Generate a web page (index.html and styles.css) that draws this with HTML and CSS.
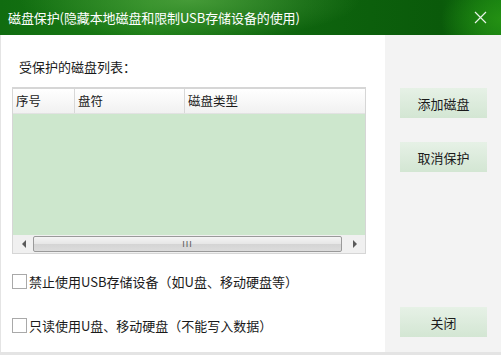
FILE: index.html
```html
<!DOCTYPE html>
<html lang="zh-CN">
<head>
    <meta charset="UTF-8">
    <title>磁盘保护</title>
    <link rel="stylesheet" href="styles.css">
</head>
<body>
    <div class="window">
        <div class="titlebar">
            <span class="title">磁盘保护(隐藏本地磁盘和限制USB存储设备的使用)</span>
            <svg class="close" width="13" height="13" viewBox="0 0 13 13">
                <path d="M1 1 L12 12 M12 1 L1 12" stroke="#e8f4e8" stroke-width="1.2" fill="none"/>
            </svg>
        </div>
        <div class="main">
            <div class="content">
                <div class="list-label">受保护的磁盘列表：</div>
                <div class="table">
                    <div class="thead">
                        <div class="th col-no">序号</div>
                        <div class="th col-drive">盘符</div>
                        <div class="th col-type">磁盘类型</div>
                    </div>
                    <div class="tbody"></div>
                    <div class="hscroll">
                        <div class="arrow arrow-left"></div>
                        <div class="thumb"><span class="grip">III</span></div>
                        <div class="arrow arrow-right"></div>
                    </div>
                </div>
                <label class="check check-first"><span class="box"></span>禁止使用USB存储设备（如U盘、移动硬盘等）</label>
                <label class="check"><span class="box"></span>只读使用U盘、移动硬盘（不能写入数据）</label>
            </div>
            <div class="side">
                <button class="btn">添加磁盘</button>
                <button class="btn btn-second">取消保护</button>
                <button class="btn btn-close">关闭</button>
            </div>
        </div>
    </div>
</body>
</html>
```

FILE: styles.css
```css
body {
    margin: 0;
    font-family: "Noto Sans CJK SC", "Liberation Sans", sans-serif;
    font-size: 13px;
    color: #1a1a1a;
    background: #ffffff;
}
.window {
    width: 501px;
    height: 355px;
    display: flex;
    flex-direction: column;
    overflow: hidden;
}
.titlebar {
    height: 35px;
    flex: none;
    display: flex;
    align-items: center;
    justify-content: space-between;
    padding: 0 14px 0 8px;
    color: #ffffff;
    background:
        radial-gradient(ellipse 170px 40px at 190px 0px, rgba(100, 180, 80, 0.6), rgba(100, 180, 80, 0) 100%),
        radial-gradient(ellipse 60px 40px at 501px 20px, rgba(40, 150, 20, 0.8), rgba(40, 150, 20, 0) 100%),
        linear-gradient(to right, #106c10 0%, #1b7c15 30%, #0e640e 60%, #0a5a0a 88%, #137a10 100%);
}
.title {
    font-size: 13px;
    letter-spacing: -0.1px;
}
.close {
    display: block;
}
.main {
    flex: 1;
    display: flex;
    border-bottom: 3px solid #e4e4e4;
    border-left: 1px solid #e4e4e4;
}
.content {
    width: 373px;
    padding: 22px 0 0 11px;
    background: #ffffff;
}
.list-label {
    padding-left: 7px;
    height: 30px;
    line-height: 20px;
}
.table {
    width: 352px;
    height: 164px;
    border: 1px solid #d6d6d6;
    border-top-width: 2px;
    display: flex;
    flex-direction: column;
}
.thead {
    height: 24px;
    display: flex;
    background: linear-gradient(#ffffff, #f1f1f1);
    border-bottom: 1px solid #e2e2e2;
}
.th {
    line-height: 24px;
    padding-left: 3px;
    border-right: 1px solid #d8d8d8;
    font-size: 12.5px;
}
.col-no {
    width: 58px;
}
.col-drive {
    width: 106px;
}
.col-type {
    flex: 1;
    border-right: none;
}
.tbody {
    flex: 1;
    background: #cde7cd;
}
.hscroll {
    height: 18px;
    display: flex;
    align-items: center;
    background: #f0f0f0;
    padding: 0 2px;
}
.arrow {
    width: 17px;
    height: 18px;
    display: flex;
    align-items: center;
    justify-content: center;
}
.arrow-left::before,
.arrow-right::before {
    content: "";
    border-top: 4px solid transparent;
    border-bottom: 4px solid transparent;
}
.arrow-left::before {
    border-right: 4px solid #5a5a5a;
}
.arrow-right::before {
    border-left: 4px solid #5a5a5a;
}
.arrow-left {
    margin-right: 1px;
}
.arrow-right {
    margin-left: 4px;
}
.thumb {
    flex: 1;
    height: 14px;
    border: 1px solid #9a9a9a;
    border-radius: 2px;
    background: linear-gradient(#f4f4f4, #e6e6e6 50%, #d4d4d4 51%, #dcdcdc);
    display: flex;
    align-items: center;
    justify-content: center;
}
.grip {
    font-family: "Liberation Sans", sans-serif;
    font-size: 9px;
    letter-spacing: 1px;
    color: #555555;
    line-height: 1;
}
.check {
    display: flex;
    align-items: center;
    height: 16px;
    gap: 2px;
}
.check-first {
    margin-top: 19px;
    margin-bottom: 28px;
}
.box {
    width: 13px;
    height: 13px;
    border: 1px solid #a9a9a9;
    background: #ffffff;
    flex: none;
}
.side {
    flex: 1;
    background: #f3f3f3;
    display: flex;
    flex-direction: column;
    align-items: flex-start;
    padding: 53px 0 0 15px;
}
.btn {
    width: 87px;
    height: 30px;
    border: none;
    padding: 0;
    font-family: "Noto Sans CJK SC", "Liberation Sans", sans-serif;
    font-size: 13px;
    color: #1a1a1a;
    background: linear-gradient(#e6f1e6, #d3e6d3);
}
.btn-second {
    margin-top: 24px;
}
.btn-close {
    margin-top: auto;
    margin-bottom: 15px;
}
```
